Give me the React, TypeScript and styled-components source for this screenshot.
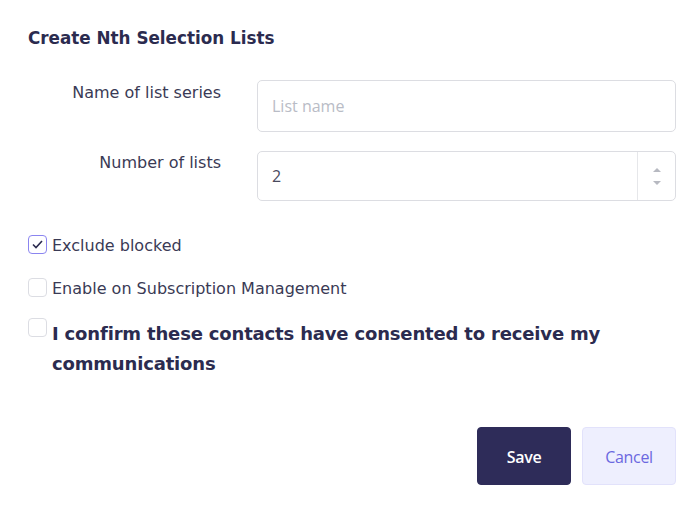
import React from "react";
import styled, { createGlobalStyle } from "styled-components";

const Global = createGlobalStyle`
  html, body { margin: 0; padding: 0; background: #ffffff; }
  body { font-family: "DejaVu Sans", Verdana, sans-serif; }
  * { box-sizing: border-box; }
`;

const Dialog = styled.div`
  width: 700px;
  height: 508px;
  background: #ffffff;
  padding: 26px 24px 0 28px;
  display: flex;
  flex-direction: column;
`;

const Title = styled.h2`
  margin: 0;
  font-family: "DejaVu Sans", Verdana, sans-serif;
  font-weight: bold;
  font-size: 16.8px;
  line-height: 24px;
  color: #2b2b4f;
`;

const Form = styled.div`
  margin-top: 30px;
  display: grid;
  grid-template-columns: 193px 1fr;
  column-gap: 36px;
  row-gap: 19px;
`;

const Label = styled.label<{ $pt: number }>`
  text-align: right;
  font-size: 16px;
  line-height: 22px;
  color: #3a3a55;
  padding-top: ${(p) => p.$pt}px;
`;

const Field = styled.div<{ $h: number }>`
  height: ${(p) => p.$h}px;
  border: 1px solid #dcdde2;
  border-radius: 5px;
  display: flex;
  align-items: stretch;
  background: #fff;
`;

const Input = styled.input`
  flex: 1;
  border: none;
  outline: none;
  background: transparent;
  padding: 0 14px;
  font-family: "Open Sans", Lato, sans-serif;
  font-size: 16px;
  color: #4a4a5e;
  &::placeholder { color: #b9bcc6; }
`;

const Spinner = styled.div`
  width: 38px;
  border-left: 1px solid #e6e7ea;
  display: flex;
  flex-direction: column;
  align-items: center;
  justify-content: center;
  gap: 9px;
`;

const Options = styled.div`
  margin-top: 34px;
  display: flex;
  flex-direction: column;
`;

const OptionRow = styled.label<{ $mt: number }>`
  display: flex;
  align-items: flex-start;
  gap: 5px;
  margin-top: ${(p) => p.$mt}px;
`;

const Box = styled.span<{ $checked?: boolean }>`
  flex: none;
  width: 19px;
  height: 19px;
  border-radius: 4px;
  border: 1.5px solid ${(p) => (p.$checked ? "#8b85f0" : "#dcdde3")};
  display: flex;
  align-items: center;
  justify-content: center;
  background: #fff;
`;

const OptionText = styled.span<{ $bold?: boolean }>`
  font-family: "DejaVu Sans", Verdana, sans-serif;
  font-size: ${(p) => (p.$bold ? "18px" : "16px")};
  font-weight: ${(p) => (p.$bold ? "bold" : "normal")};
  line-height: ${(p) => (p.$bold ? "30px" : "22px")};
  color: ${(p) => (p.$bold ? "#2b2b4f" : "#3a3a55")};
  letter-spacing: ${(p) => (p.$bold ? "-0.17px" : "0")};
  margin-top: ${(p) => (p.$bold ? "1px" : "0")};
`;

const Footer = styled.div`
  margin-top: auto;
  margin-bottom: 23px;
  display: flex;
  justify-content: flex-end;
  gap: 11px;
`;

const Button = styled.button<{ $primary?: boolean }>`
  width: 94px;
  height: 58px;
  border-radius: 4px;
  font-family: "Open Sans", Lato, sans-serif;
  font-size: 16px;
  font-weight: ${(p) => (p.$primary ? 600 : 500)};
  cursor: pointer;
  padding-top: 2px;
  background: ${(p) => (p.$primary ? "#2e2c59" : "#eeeffe")};
  color: ${(p) => (p.$primary ? "#ffffff" : "#6b68e0")};
  border: 1px solid ${(p) => (p.$primary ? "#2e2c59" : "#e2e2fb")};
  letter-spacing: -0.3px;
`;

export default function App() {
  return (
    <>
      <Global />
      <Dialog>
        <Title>Create Nth Selection Lists</Title>
        <Form>
          <Label $pt={2}>Name of list series</Label>
          <Field $h={52}>
            <Input placeholder="List name" />
          </Field>
          <Label $pt={1}>Number of lists</Label>
          <Field $h={50}>
            <Input defaultValue="2" />
            <Spinner>
              <svg width="8" height="4" viewBox="0 0 8 4"><path d="M0 4 L4 0 L8 4 Z" fill="#b7b9c1" /></svg>
              <svg width="8" height="4" viewBox="0 0 8 4"><path d="M0 0 L4 4 L8 0 Z" fill="#b7b9c1" /></svg>
            </Spinner>
          </Field>
        </Form>
        <Options>
          <OptionRow $mt={0}>
            <Box $checked>
              <svg width="11" height="9" viewBox="0 0 11 9"><path d="M1 4.5 L4 7.5 L10 1" fill="none" stroke="#2b2b4f" strokeWidth="1.6" /></svg>
            </Box>
            <OptionText>Exclude blocked</OptionText>
          </OptionRow>
          <OptionRow $mt={21}>
            <Box />
            <OptionText>Enable on Subscription Management</OptionText>
          </OptionRow>
          <OptionRow $mt={18}>
            <Box />
            <OptionText $bold>I confirm these contacts have consented to receive my communications</OptionText>
          </OptionRow>
        </Options>
        <Footer>
          <Button $primary>Save</Button>
          <Button>Cancel</Button>
        </Footer>
      </Dialog>
    </>
  );
}
